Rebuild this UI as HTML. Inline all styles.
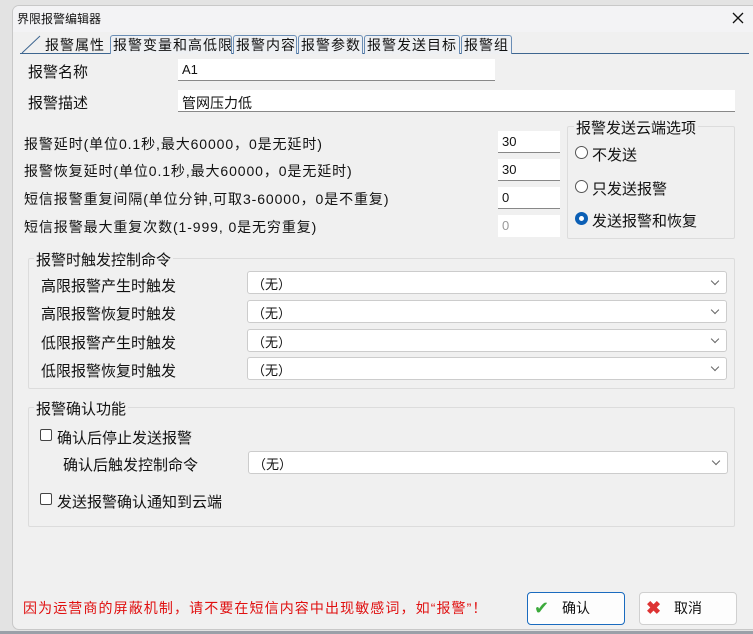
<!DOCTYPE html>
<html><head><meta charset="utf-8"><style>
*{margin:0;padding:0;box-sizing:border-box}
body{width:753px;height:634px;background:#e3e3e3;font-family:"Liberation Sans","Noto Sans CJK SC",sans-serif;font-size:14px;color:#111;position:relative;overflow:hidden}
.win{position:absolute;left:12px;top:5px;width:760px;height:625px;background:#f0f0f0;border:1px solid #c8c8c8;border-radius:7px;overflow:hidden}
.a{position:absolute;white-space:nowrap}
.ls{letter-spacing:0.9px}
.inp{position:absolute;background:#fff;border-bottom:1px solid #888;height:22px;padding:3px 4px;font-size:13px}
.grp{position:absolute;border:1px solid #dcdcdc;border-radius:2px}
.leg{position:absolute;background:#f0f0f0;padding:0 2px}
.sel{position:absolute;background:#fff;border:1px solid #ccc;border-radius:3px;height:23px;padding:2px 4px;font-size:13px}
.sel:after{content:"";position:absolute;right:8px;top:6px;width:5px;height:5px;border-right:1px solid #666;border-bottom:1px solid #666;transform:rotate(45deg)}
.tab{position:absolute;top:35px;height:19px;border:1px solid #6a8db5;border-bottom:none;border-radius:3px 3px 0 0;background:#eef0f3;padding:0 2px;font-size:14px;letter-spacing:1px;line-height:18px;white-space:nowrap;overflow:hidden}
.rad{position:absolute;width:13px;height:13px;border:1px solid #555;border-radius:50%;background:#fff}
.chk{position:absolute;width:12px;height:12px;border:1px solid #444;border-radius:2px;background:#fff}
.btn{position:absolute;height:33px;background:#fdfdfd;border:1px solid #d0d0d0;border-radius:4px;text-align:center;line-height:31px}
</style></head><body>
<div class="win">
<div style="position:absolute;left:0;top:0;width:760px;height:26px;background:#f3f3f5"></div>
</div>
<div class="a" style="left:17px;top:10px;font-size:12px">界限报警编辑器</div>
<svg style="position:absolute;left:732px;top:12px" width="12" height="12"><path d="M1 1L11 11M11 1L1 11" stroke="#111" stroke-width="1.3"/></svg>
<div style="position:absolute;left:20px;top:53px;width:729px;height:1px;background:#3e6690"></div>
<svg style="position:absolute;left:20px;top:35px" width="24" height="19"><path d="M2 18 L20 1" stroke="#3e6690" fill="none"/></svg>
<div class="a" style="left:45px;top:36px;line-height:18px;font-size:14px;letter-spacing:1px">报警属性</div>
<div class="tab" style="left:110px;width:122px">报警变量和高低限</div>
<div class="tab" style="left:233px;width:64px">报警内容</div>
<div class="tab" style="left:298px;width:65px">报警参数</div>
<div class="tab" style="left:364px;width:96px">报警发送目标</div>
<div class="tab" style="left:461px;width:51px">报警组</div>

<div class="a" style="left:28px;top:61px;font-size:15px">报警名称</div>
<div class="inp" style="left:178px;top:59px;width:317px">A1</div>
<div class="a" style="left:28px;top:92px;font-size:15px">报警描述</div>
<div class="inp" style="left:178px;top:90px;width:557px;font-size:14px">管网压力低</div>

<div class="a ls" style="left:24px;top:134px">报警延时(单位0.1秒,最大60000，0是无延时)</div>
<div class="a ls" style="left:24px;top:161px">报警恢复延时(单位0.1秒,最大60000，0是无延时)</div>
<div class="a ls" style="left:24px;top:189px">短信报警重复间隔(单位分钟,可取3-60000，0是不重复)</div>
<div class="a ls" style="left:24px;top:217px">短信报警最大重复次数(1-999, 0是无穷重复)</div>
<div class="inp" style="left:498px;top:131px;width:62px">30</div>
<div class="inp" style="left:498px;top:159px;width:62px">30</div>
<div class="inp" style="left:498px;top:187px;width:62px">0</div>
<div class="inp" style="left:498px;top:215px;width:62px;color:#999;border-bottom:none">0</div>

<div class="grp" style="left:567px;top:126px;width:168px;height:113px"></div>
<div class="leg a" style="left:574px;top:117px;font-size:15px">报警发送云端选项</div>
<div class="rad" style="left:575px;top:146px"></div><div class="a" style="left:592px;top:144px;font-size:15px">不发送</div>
<div class="rad" style="left:575px;top:180px"></div><div class="a" style="left:592px;top:178px;font-size:15px">只发送报警</div>
<div class="rad" style="left:575px;top:212px;border:4px solid #0b5fb5"></div><div class="a" style="left:592px;top:210px;font-size:15px">发送报警和恢复</div>

<div class="grp" style="left:28px;top:258px;width:707px;height:131px"></div>
<div class="leg a" style="left:34px;top:249px;font-size:15px">报警时触发控制命令</div>
<div class="a" style="left:41px;top:275px;font-size:15px">高限报警产生时触发</div>
<div class="a" style="left:41px;top:303px;font-size:15px">高限报警恢复时触发</div>
<div class="a" style="left:41px;top:332px;font-size:15px">低限报警产生时触发</div>
<div class="a" style="left:41px;top:360px;font-size:15px">低限报警恢复时触发</div>
<div class="sel" style="left:247px;top:271px;width:480px">（无）</div>
<div class="sel" style="left:247px;top:300px;width:480px">（无）</div>
<div class="sel" style="left:247px;top:329px;width:480px">（无）</div>
<div class="sel" style="left:247px;top:357px;width:480px">（无）</div>

<div class="grp" style="left:28px;top:407px;width:707px;height:120px"></div>
<div class="leg a" style="left:34px;top:398px;font-size:15px">报警确认功能</div>
<div class="chk" style="left:40px;top:429px"></div><div class="a" style="left:57px;top:427px;font-size:15px">确认后停止发送报警</div>
<div class="a" style="left:63px;top:454px;font-size:15px">确认后触发控制命令</div>
<div class="sel" style="left:248px;top:451px;width:480px">（无）</div>
<div class="chk" style="left:40px;top:493px"></div><div class="a" style="left:57px;top:491px;font-size:15px">发送报警确认通知到云端</div>

<div class="a" style="left:23px;top:598px;color:#e01010;letter-spacing:1.1px">因为运营商的屏蔽机制，请不要在短信内容中出现敏感词，如“报警”！</div>
<div class="btn" style="left:527px;top:592px;width:98px;border-color:#1a6bbf"><span style="position:absolute;left:6px;color:#3caa3c;font-size:18px">✔</span>确认</div>
<div class="btn" style="left:639px;top:592px;width:98px"><span style="position:absolute;left:6px;color:#d33;font-size:18px;font-weight:bold">✖</span>取消</div>
<div style="position:absolute;left:0;top:631px;width:753px;height:3px;background:#9aa0a8"></div>
</body></html>
